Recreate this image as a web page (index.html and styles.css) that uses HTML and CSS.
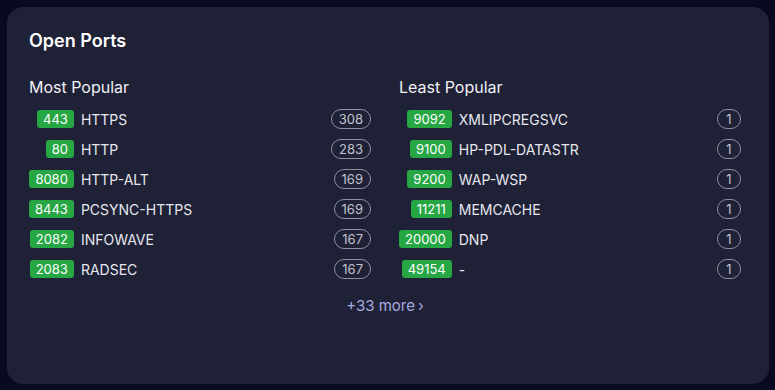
FILE: index.html
```html
<!DOCTYPE html>
<html>
<head>
<meta charset="utf-8">
<link rel="stylesheet" href="styles.css">
</head>
<body>
<div class="card">
  <h2 class="title">Open Ports</h2>
  <div class="cols">
    <div class="col">
      <div class="sub">Most Popular</div>
      <div class="list">
        <span class="port">443</span><span class="name">HTTPS</span><span class="count">308</span>
        <span class="port">80</span><span class="name">HTTP</span><span class="count">283</span>
        <span class="port">8080</span><span class="name">HTTP-ALT</span><span class="count">169</span>
        <span class="port">8443</span><span class="name">PCSYNC-HTTPS</span><span class="count">169</span>
        <span class="port">2082</span><span class="name">INFOWAVE</span><span class="count">167</span>
        <span class="port">2083</span><span class="name">RADSEC</span><span class="count">167</span>
      </div>
    </div>
    <div class="col">
      <div class="sub">Least Popular</div>
      <div class="list">
        <span class="port">9092</span><span class="name">XMLIPCREGSVC</span><span class="count">1</span>
        <span class="port">9100</span><span class="name">HP-PDL-DATASTR</span><span class="count">1</span>
        <span class="port">9200</span><span class="name">WAP-WSP</span><span class="count">1</span>
        <span class="port">11211</span><span class="name">MEMCACHE</span><span class="count">1</span>
        <span class="port">20000</span><span class="name">DNP</span><span class="count">1</span>
        <span class="port">49154</span><span class="name">-</span><span class="count">1</span>
      </div>
    </div>
  </div>
  <div class="more"><a class="more-link">+33 more<span class="chev">›</span></a></div>
</div>
</body>
</html>
```

FILE: styles.css
```css
html, body {
  margin: 0;
  padding: 0;
  background: #080a22;
}
body {
  width: 775px;
  height: 390px;
  padding: 7px 6px 6px 7px;
  box-sizing: border-box;
  font-family: Inter, "Noto Sans", sans-serif;
  color: #e4e5ee;
}
.card {
  background: #1f2136;
  border-radius: 16px;
  height: 377px;
  box-sizing: border-box;
  padding: 22px 28px 0 22px;
}
.title {
  margin: 0;
  font-size: 18px;
  line-height: 24px;
  font-weight: 600;
  color: #ffffff;
}
.cols {
  display: grid;
  grid-template-columns: 1fr 1fr;
  column-gap: 28px;
  margin-top: 24px;
}
.sub {
  font-size: 16px;
  line-height: 20px;
  color: #f0f0f5;
  margin-bottom: 7px;
}
.list {
  display: grid;
  grid-template-columns: auto 1fr auto;
  grid-auto-rows: 30px;
  align-items: center;
}
.port {
  justify-self: end;
  background: #26a744;
  color: #ffffff;
  font-size: 13px;
  line-height: 18px;
  height: 18px;
  padding: 0 6px;
  border-radius: 3px;
}
.name {
  margin-left: 7px;
  font-size: 14px;
  color: #e6e7ef;
}
.count {
  justify-self: end;
  box-sizing: border-box;
  min-width: 24px;
  height: 20px;
  line-height: 18px;
  padding: 0 7px;
  border: 1px solid #8e8fa0;
  border-radius: 10px;
  font-size: 13px;
  text-align: center;
  color: #c0c1cc;
}
.more {
  text-align: center;
  margin-top: 11px;
}
.more-link {
  font-size: 15px;
  line-height: 20px;
  color: #a7abe0;
}
.chev {
  margin-left: 3px;
}
```
